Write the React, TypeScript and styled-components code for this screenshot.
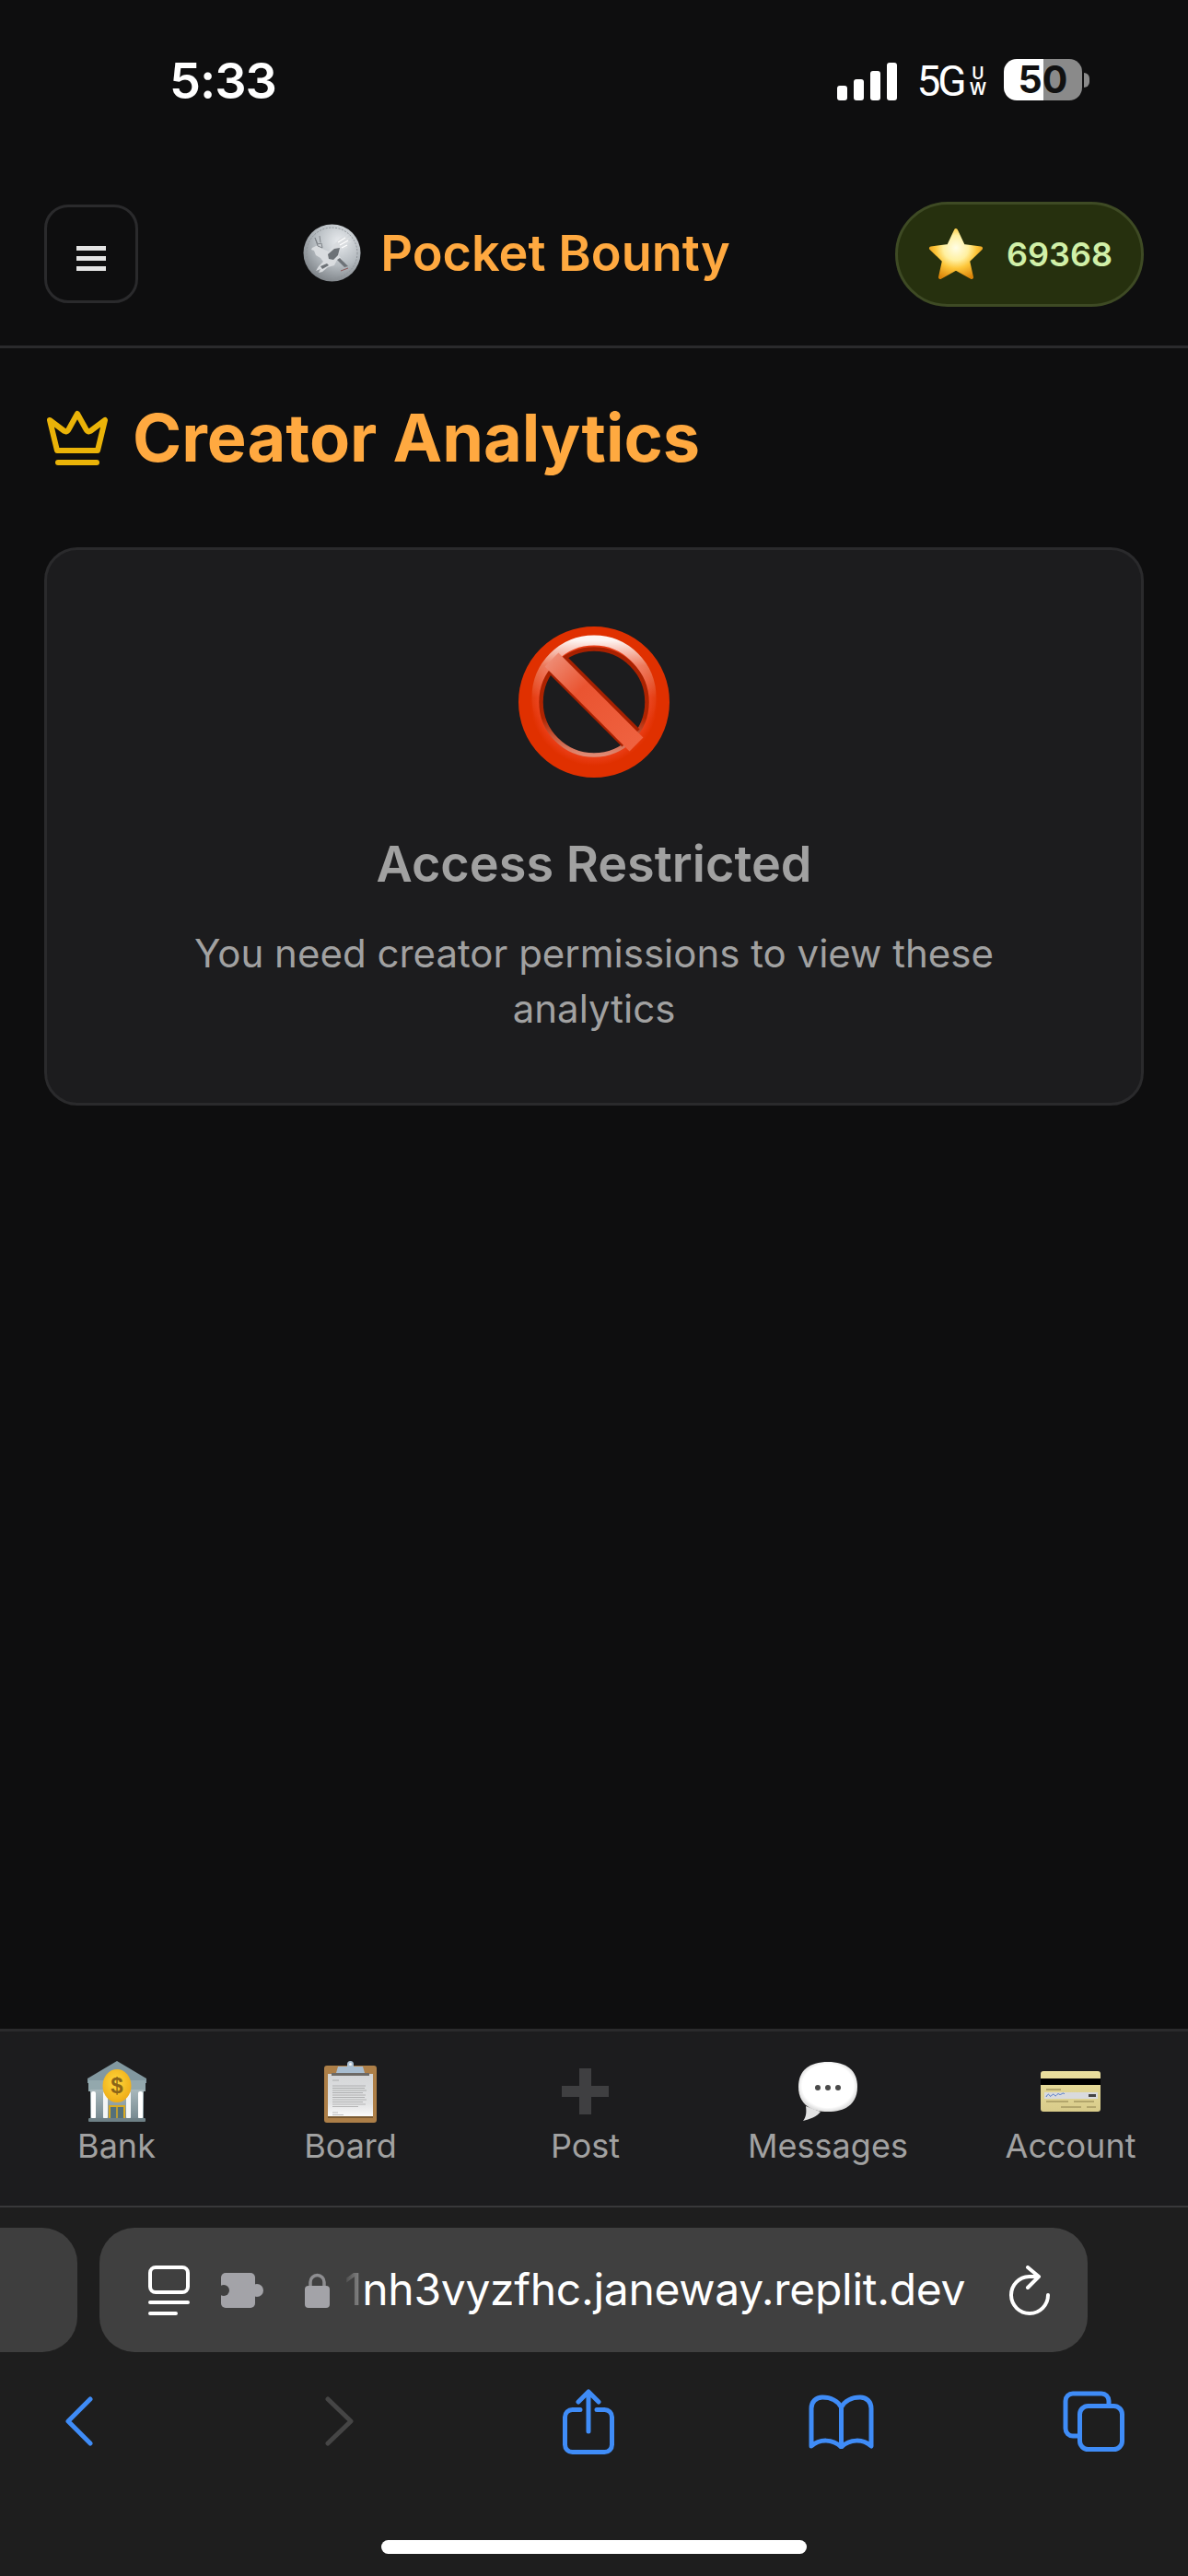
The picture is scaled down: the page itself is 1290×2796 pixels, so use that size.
import React from "react";
import styled, { createGlobalStyle } from "styled-components";

const Global = createGlobalStyle`
  html, body { margin: 0; padding: 0; background: #0e0e0f; }
  * { box-sizing: border-box; }
`;

const Page = styled.div`
  width: 1290px;
  height: 2796px;
  display: flex;
  flex-direction: column;
  overflow: hidden;
  background: #0e0e0f;
  font-family: Inter, "Noto Sans", sans-serif;
`;

/* ---- iOS status bar ---- */
const StatusBar = styled.div`
  height: 176px;
  flex: none;
  display: flex;
  align-items: center;
  justify-content: space-between;
  padding: 0 107px 0 184px;
`;
const Time = styled.div`
  font-size: 54px;
  font-weight: 600;
  line-height: 1;
  color: #fff;
  letter-spacing: -1px;
`;
const StatusRight = styled.div`
  display: flex;
  align-items: center;
`;
const Signal = styled.div`
  display: flex;
  align-items: flex-end;
  gap: 7px;
  height: 41px;
  margin-right: 21px;
`;
const SignalBar = styled.span<{ $h: number }>`
  width: 11px;
  height: ${(p) => p.$h}px;
  border-radius: 3px;
  background: #fff;
`;
const NetLabel = styled.div`
  font-family: Roboto, sans-serif;
  font-size: 46px;
  line-height: 1;
  font-weight: 400;
  color: #fff;
  letter-spacing: -3px;
  margin-right: 6px;
`;
const NetSub = styled.div`
  display: flex;
  flex-direction: column;
  align-items: center;
  font-size: 18px;
  line-height: 17px;
  font-weight: 600;
  color: #fff;
  margin-right: 19px;
`;
const Battery = styled.div`
  width: 85px;
  height: 45px;
  border-radius: 14px;
  margin-top: -3px;
  background: linear-gradient(90deg, #fff 0 43px, #8a8a8a 43px);
  color: #111;
  font-size: 41px;
  font-weight: 700;
  line-height: 45px;
  text-align: center;
`;
const BatteryNub = styled.span`
  width: 6px;
  height: 16px;
  margin: -3px 0 0 2px;
  border-radius: 0 6px 6px 0;
  background: #8a8a8a;
`;

/* ---- App header ---- */
const Header = styled.header`
  flex: none;
  height: 202px;
  display: flex;
  align-items: center;
  justify-content: space-between;
  padding: 0 48px;
  border-bottom: 3px solid #2a2a2c;
`;
const MenuButton = styled.div`
  width: 102px;
  height: 107px;
  padding-top: 9px;
  border: 3px solid #2a2a2c;
  border-radius: 26px;
  display: flex;
  flex-direction: column;
  align-items: center;
  justify-content: center;
  gap: 6px;
`;
const MenuLine = styled.span`
  width: 32px;
  height: 5px;
  background: #e4e4e4;
`;
const Brand = styled.div`
  display: flex;
  align-items: center;
  gap: 21px;
  margin-top: -2px;
  font-size: 54px;
  font-weight: 600;
  line-height: 81px;
  color: #ffa940;
`;
const Balance = styled.div`
  width: 270px;
  height: 114px;
  border: 3px solid #3e4a24;
  border-radius: 57px;
  background: #26300e;
  display: flex;
  align-items: center;
  gap: 25px;
  padding-left: 33px;
  font-size: 36px;
  font-weight: 600;
  color: #d1f0a8;
`;

/* ---- Main ---- */
const Main = styled.main`
  flex: 1;
  padding: 43px 48px 0;
`;
const PageTitle = styled.h1`
  margin: 0 0 65px;
  display: flex;
  align-items: center;
  gap: 27px;
  padding-left: 3px;
  font-size: 72px;
  line-height: 108px;
  font-weight: 700;
  color: #ffa940;
`;
const RestrictedCard = styled.section`
  height: 606px;
  border: 3px solid #2a2a2c;
  border-radius: 36px;
  background: #1c1c1e;
  padding: 83px 72px 0;
  display: flex;
  flex-direction: column;
  align-items: center;
  text-align: center;
`;
const CardTitle = styled.h2`
  margin: 52px 0 25px;
  font-size: 54px;
  line-height: 84px;
  font-weight: 600;
  color: #a1a1a1;
`;
const CardText = styled.p`
  margin: 0;
  font-size: 42px;
  line-height: 60px;
  font-weight: 400;
  color: #a1a1a1;
`;

/* ---- Bottom nav ---- */
const BottomNav = styled.nav`
  flex: none;
  height: 194px;
  border-top: 3px solid #2a2a2c;
  border-bottom: 2px solid #38383a;
  background: #1c1c1e;
  padding-top: 29px;
  display: grid;
  grid-template-columns: 253px 255px 255px 272px 255px;
  align-items: start;
`;
const NavItem = styled.div`
  display: flex;
  flex-direction: column;
  align-items: center;
`;
const NavIconSlot = styled.div`
  height: 72px;
  display: flex;
  align-items: center;
  justify-content: center;
`;
const NavLabel = styled.span`
  font-size: 36px;
  line-height: 46px;
  color: #a1a1a1;
`;

/* ---- Safari chrome ---- */
const Browser = styled.div`
  flex: none;
  height: 400px;
  background: #1e1e1e;
  padding-top: 22px;
`;
const TabRow = styled.div`
  height: 135px;
  display: flex;
  gap: 24px;
`;
const TabStub = styled.div`
  width: 84px;
  background: #3e3e3e;
  border-radius: 0 38px 38px 0;
`;
const UrlBar = styled.div`
  width: 1073px;
  background: #404040;
  border-radius: 38px;
  display: flex;
  align-items: center;
  padding: 0 41px 0 53px;
`;
const UrlIcon = styled.span<{ $gap: number }>`
  display: flex;
  margin-right: ${(p) => p.$gap}px;
`;
const UrlText = styled.div`
  flex: 1;
  font-size: 48px;
  line-height: 60px;
  font-weight: 400;
  color: #fff;
  white-space: nowrap;
  letter-spacing: -0.3px;
  margin: -2px 0 0 -1px;
`;
const FadedChar = styled.span`
  background: linear-gradient(90deg, #4a4a4a, #8c8c8c);
  -webkit-background-clip: text;
  background-clip: text;
  color: transparent;
`;
const Toolbar = styled.div`
  height: 72px;
  margin-top: 39px;
  padding-left: 71px;
  display: grid;
  grid-template-columns: 282px 258px 267px 276px auto;
  align-items: center;
  justify-items: start;
`;
const HomeIndicator = styled.div`
  width: 462px;
  height: 15px;
  margin: 93px auto 0;
  border-radius: 8px;
  background: #fff;
`;

const Svg = styled.svg`
  display: block;
  flex: none;
`;

/* ---- drawn icons ---- */
const Coin = () => (
  <Svg width="63" height="63" viewBox="0 0 63 63">
    <defs>
      <radialGradient id="coinG" cx="0.62" cy="0.3" r="0.85">
        <stop offset="0" stopColor="#e8ebee" />
        <stop offset="0.5" stopColor="#b4babf" />
        <stop offset="1" stopColor="#6a6f74" />
      </radialGradient>
    </defs>
    <circle cx="31.5" cy="31.5" r="31" fill="url(#coinG)" />
    <circle cx="31.5" cy="31.5" r="27.500" fill="none" stroke="#8d9297" strokeWidth="1" strokeDasharray="2 1.500" />
    <path d="M10 26l6-3 5 4 7 3 5-7 7-7 10-5-4 5 7-2-6 5 6 0-7 4 3 3-8 1-2 7 5 7-7-2-3 6-7 2-6 5-4 1 2-4-5 2 3-5 5-5-3-4-5-3-2-5-3-1z" fill="#d9dcdf" />
    <path d="M13 15l3 7 4-1 1 5-5-2zM18 13l1 7" stroke="#7d8287" strokeWidth="1" fill="#c8ccd0" />
    <path d="M27 33l7-6 6-1-2 8-5 5-5-1zM19 46l7-3 2 2-7 4zM37 39l8 8 4-1-9-9z" fill="#6d7277" />
    <path d="M38 20l8-5M40 23l9-5M42 26l6-3" stroke="#fff" strokeWidth="1.200" />
    <path d="M41 51l8-3" stroke="#8c5a5a" strokeWidth="1" />
  </Svg>
);

const Star = () => (
  <Svg width="60" height="57" viewBox="0 0 60 57">
    <defs>
      <radialGradient id="starG" cx="30" cy="22" r="36" gradientUnits="userSpaceOnUse">
        <stop offset="0" stopColor="#fffde6" />
        <stop offset="0.38" stopColor="#fff0a0" />
        <stop offset="0.62" stopColor="#fdc63a" />
        <stop offset="1" stopColor="#d98208" />
      </radialGradient>
    </defs>
    <path
      d="M30 3l8 17 19 2.500-14 13.500 4 18-17-9.500-17 9.500 4-18-14-13.500 19-2.500z"
      fill="url(#starG)"
      stroke="url(#starG)"
      strokeWidth="4"
      strokeLinejoin="round"
    />
  </Svg>
);

const Crown = () => (
  <Svg width="66" height="60" viewBox="0 0 66 60" fill="none" stroke="#eab308" strokeWidth="6" strokeLinecap="round" strokeLinejoin="round">
    <path d="M3 11l16 12a3 3 0 0 0 4-1L33 4l10 18a3 3 0 0 0 4 1l16-12-8 33H11z" />
    <path d="M12 57h42" />
  </Svg>
);

const Prohibited = () => (
  <Svg width="164" height="164" viewBox="0 0 164 164" fill="none">
    <defs>
      <radialGradient id="ringG" cx="0.5" cy="0.5" r="0.5">
        <stop offset="0.7" stopColor="#f0583a" />
        <stop offset="0.88" stopColor="#e93c14" />
        <stop offset="1" stopColor="#e03000" />
      </radialGradient>
      <linearGradient id="ringHi" x1="0" y1="0" x2="0" y2="1">
        <stop offset="0" stopColor="#fff" stopOpacity="0.95" />
        <stop offset="0.22" stopColor="#fff" stopOpacity="0.35" />
        <stop offset="0.5" stopColor="#fff" stopOpacity="0.05" />
        <stop offset="0.7" stopColor="#fff" stopOpacity="0" />
      </linearGradient>
      <linearGradient id="barG" x1="0" y1="0" x2="1" y2="1">
        <stop offset="0" stopColor="#ee8a72" />
        <stop offset="0.35" stopColor="#ea5431" />
        <stop offset="1" stopColor="#ef6240" />
      </linearGradient>
      <linearGradient id="rimG" x1="0" y1="0" x2="0" y2="1">
        <stop offset="0" stopColor="#a82000" />
        <stop offset="0.65" stopColor="#b02400" />
        <stop offset="1" stopColor="#e08a74" />
      </linearGradient>
    </defs>
    <circle cx="82" cy="82" r="69" stroke="url(#ringG)" strokeWidth="26" />
    <circle cx="82" cy="77" r="62" stroke="url(#ringHi)" strokeWidth="11" />
    <circle cx="82" cy="82" r="57.500" stroke="url(#rimG)" strokeWidth="4.500" />
    <path d="M42 41l80 80" stroke="#a82000" strokeWidth="27" />
    <path d="M36 36l92 92" stroke="url(#barG)" strokeWidth="21" />
  </Svg>
);

const Bank = () => (
  <Svg width="64" height="66" viewBox="0 0 64 66">
    <defs>
      <linearGradient id="bankG" x1="0" y1="0" x2="0" y2="1">
        <stop offset="0" stopColor="#a8b8bc" />
        <stop offset="1" stopColor="#75888f" />
      </linearGradient>
      <radialGradient id="bankCoin" cx="0.45" cy="0.4" r="0.7">
        <stop offset="0" stopColor="#ffd83c" />
        <stop offset="1" stopColor="#eda612" />
      </radialGradient>
    </defs>
    <path d="M32 0L64 19v5H0v-5z" fill="#8298a0" />
    <rect x="1" y="21" width="62" height="12" fill="#93a8ad" />
    <rect x="3" y="31" width="58" height="33" fill="url(#bankG)" />
    <rect x="4" y="33" width="5" height="30" rx="2" fill="#fff" />
    <rect x="17" y="33" width="5" height="30" rx="2" fill="#f4f6f6" />
    <rect x="42" y="33" width="5" height="30" rx="2" fill="#f4f6f6" />
    <rect x="55" y="33" width="5" height="30" rx="2" fill="#fff" />
    <rect x="24" y="49" width="16" height="15" fill="#54707a" stroke="#d9aa22" strokeWidth="2" />
    <path d="M32 49v15" stroke="#d9aa22" strokeWidth="1.500" />
    <rect x="1" y="62" width="62" height="4" rx="1" fill="#6e8086" />
    <ellipse cx="32" cy="27" rx="15.500" ry="18" fill="url(#bankCoin)" />
    <text x="32" y="35" textAnchor="middle" fontFamily="Liberation Sans, sans-serif" fontSize="24" fontWeight="700" fill="#8a6418">$</text>
  </Svg>
);

const Clipboard = () => (
  <Svg width="57" height="67" viewBox="0 0 57 67">
    <defs>
      <linearGradient id="paperG" x1="0" y1="0" x2="0" y2="1">
        <stop offset="0" stopColor="#d4d6d8" />
        <stop offset="0.7" stopColor="#e2e3e4" />
        <stop offset="1" stopColor="#fafafa" />
      </linearGradient>
    </defs>
    <rect x="0" y="5" width="57" height="62" rx="3" fill="#ad7f48" />
    <rect x="4" y="14" width="49" height="46" fill="url(#paperG)" />
    <rect x="4" y="60" width="49" height="2" fill="#7a5a32" />
    <path d="M28.500 0a3.500 3.500 0 0 1 3.500 3.500V6h10l2 7H13l2-7h10V3.500A3.500 3.500 0 0 1 28.500 0z" fill="#a8bdd0" />
    <rect x="8" y="13" width="41" height="3" fill="#6d6a66" />
    <circle cx="28.500" cy="3.500" r="1.500" fill="#f2f2f2" />
    <path
      d="M9 21h7M9 27h36M9 29.500h35M9 32h37M9 34.500h33M9 37h36M9 39.500h35M9 42h37M9 44.500h33M9 47h36M9 49.500h28M9 56h6M9 58.500h12"
      stroke="#7d7d7d"
      strokeWidth="0.800"
      opacity="0.6"
    />
  </Svg>
);

const Plus = () => (
  <Svg width="51" height="50" viewBox="0 0 51 50">
    <path d="M19 0h13v19h19v12H32v19H19V31H0V19h19z" fill="#3f3f41" />
  </Svg>
);

const Bubble = () => (
  <Svg width="64" height="64" viewBox="0 0 64 64">
    <defs>
      <radialGradient id="bubG" cx="0.5" cy="0.48" r="0.56">
        <stop offset="0.78" stopColor="#fff" />
        <stop offset="1" stopColor="#cfcfcf" />
      </radialGradient>
    </defs>
    <path d="M5 64c3-4 4-8 3-16l16 6C20 60 12 62 5 64z" fill="#e2e2e2" />
    <path d="M32 0C52 0 64 9 64 27S52 54 32 54 0 45 0 27 12 0 32 0z" fill="url(#bubG)" />
    <circle cx="21" cy="28" r="3" fill="#4a4a4a" />
    <circle cx="32" cy="28" r="3" fill="#4a4a4a" />
    <circle cx="43" cy="28" r="3" fill="#4a4a4a" />
  </Svg>
);

const CreditCard = () => (
  <Svg width="65" height="44" viewBox="0 0 65 44">
    <defs>
      <linearGradient id="cardG" x1="0" y1="0" x2="0" y2="1">
        <stop offset="0" stopColor="#eadf9e" />
        <stop offset="1" stopColor="#d8cb8a" />
      </linearGradient>
    </defs>
    <rect width="65" height="44" rx="3" fill="url(#cardG)" />
    <rect y="8" width="65" height="7" fill="#000" />
    <rect x="4" y="23" width="58" height="7" fill="#d9dadd" />
    <path d="M6 28c2-4 3-3 4-1s3-4 5-1 3-3 5-1 4-3 6 0" stroke="#4a74c8" strokeWidth="1" fill="none" />
    <rect x="52" y="25" width="8" height="3" fill="#444" />
    <path d="M6 20h16M6 33h24M36 33h22M22 39h22M50 39h10" stroke="#b3a66c" strokeWidth="2" />
  </Svg>
);

const MenuGlyph = () => (
  <Svg width="45" height="54" viewBox="0 0 45 54" fill="none" stroke="#fff" strokeWidth="4" strokeLinecap="round">
    <rect x="2" y="2" width="41" height="27" rx="6" />
    <path d="M2 40h41M2 52h28" />
  </Svg>
);
const Puzzle = () => (
  <Svg width="46" height="38" viewBox="0 0 46 38">
    <rect width="37" height="38" rx="5" fill="#a3a3a8" />
    <circle cx="39" cy="19" r="7" fill="#a3a3a8" />
    <circle cx="3" cy="19" r="6" fill="#404040" />
  </Svg>
);
const Lock = () => (
  <Svg width="27" height="39" viewBox="0 0 27 39">
    <path d="M6 17V11a7.500 7.500 0 0 1 15 0v6" fill="none" stroke="#8e8e91" strokeWidth="3.500" />
    <rect y="15" width="27" height="24" rx="4" fill="#a3a3a8" />
  </Svg>
);
const Reload = () => (
  <Svg width="45" height="54" viewBox="0 0 45 54" fill="none" stroke="#fff" strokeWidth="4" strokeLinecap="round" strokeLinejoin="round">
    <path d="M32 12H22.500A20 20 0 1 0 43 32" />
    <path d="M21 2l12 10-12 12" />
  </Svg>
);

const blue = "#3f8cf7";
const Back = () => (
  <Svg width="30" height="54" viewBox="0 0 30 54" fill="none" stroke={blue} strokeWidth="5" strokeLinecap="round" strokeLinejoin="round">
    <path d="M27 3L3 27l24 24" />
  </Svg>
);
const Forward = () => (
  <Svg width="31" height="54" viewBox="0 0 31 54" fill="none" stroke="#454545" strokeWidth="5" strokeLinecap="round" strokeLinejoin="round">
    <path d="M3 3l25 24L3 51" />
  </Svg>
);
const Share = () => (
  <Svg width="56" height="71" viewBox="0 0 56 71" fill="none" stroke={blue} strokeWidth="5" strokeLinecap="round" strokeLinejoin="round">
    <path d="M19 22.500H10.500a8 8 0 0 0-8 8V60.500a8 8 0 0 0 8 8h35a8 8 0 0 0 8-8V30.500a8 8 0 0 0-8-8H37" />
    <path d="M28 46V3M17 14L28 3l11 11" />
  </Svg>
);
const Book = () => (
  <Svg width="71" height="59" viewBox="0 0 71 59" fill="none" stroke={blue} strokeWidth="5" strokeLinecap="round" strokeLinejoin="round">
    <path d="M35.500 14C32 7 24 3 15 3 8 3 3 8 3 15v41c9-8 23-8 32.500 1C45 48 59 48 68 56V15c0-7-5-12-12-12-9 0-17 4-20.500 11v43" />
  </Svg>
);
const Tabs = () => (
  <Svg width="67" height="66" viewBox="0 0 67 66" fill="none" stroke={blue} strokeWidth="5" strokeLinejoin="round">
    <path d="M16 49h-5a8 8 0 0 1-8-8V11a8 8 0 0 1 8-8h31a8 8 0 0 1 8 8v4" />
    <rect x="18.500" y="16.500" width="46" height="47" rx="9" />
  </Svg>
);

const navItems: { label: string; icon: React.ReactNode }[] = [
  { label: "Bank", icon: <Bank /> },
  { label: "Board", icon: <Clipboard /> },
  { label: "Post", icon: <Plus /> },
  { label: "Messages", icon: <Bubble /> },
  { label: "Account", icon: <CreditCard /> },
];

export default function App() {
  return (
    <Page>
      <Global />
      <StatusBar>
        <Time>5:33</Time>
        <StatusRight>
          <Signal>
            {[16, 23, 32, 41].map((h) => (
              <SignalBar key={h} $h={h} />
            ))}
          </Signal>
          <NetLabel>5G</NetLabel>
          <NetSub>
            <span>U</span>
            <span>W</span>
          </NetSub>
          <Battery>50</Battery>
          <BatteryNub />
        </StatusRight>
      </StatusBar>

      <Header>
        <MenuButton>
          <MenuLine />
          <MenuLine />
          <MenuLine />
        </MenuButton>
        <Brand>
          <Coin />
          Pocket Bounty
        </Brand>
        <Balance>
          <Star />
          69368
        </Balance>
      </Header>

      <Main>
        <PageTitle>
          <Crown />
          Creator Analytics
        </PageTitle>
        <RestrictedCard>
          <Prohibited />
          <CardTitle>Access Restricted</CardTitle>
          <CardText>You need creator permissions to view these analytics</CardText>
        </RestrictedCard>
      </Main>

      <BottomNav>
        {navItems.map((item) => (
          <NavItem key={item.label}>
            <NavIconSlot>{item.icon}</NavIconSlot>
            <NavLabel>{item.label}</NavLabel>
          </NavItem>
        ))}
      </BottomNav>

      <Browser>
        <TabRow>
          <TabStub />
          <UrlBar>
            <UrlIcon $gap={34}><MenuGlyph /></UrlIcon>
            <UrlIcon $gap={45}><Puzzle /></UrlIcon>
            <UrlIcon $gap={17}><Lock /></UrlIcon>
            <UrlText><FadedChar>1</FadedChar>nh3vyzfhc.janeway.replit.dev</UrlText>
            <Reload />
          </UrlBar>
        </TabRow>
        <Toolbar>
          <Back />
          <Forward />
          <Share />
          <Book />
          <Tabs />
        </Toolbar>
        <HomeIndicator />
      </Browser>
    </Page>
  );
}
